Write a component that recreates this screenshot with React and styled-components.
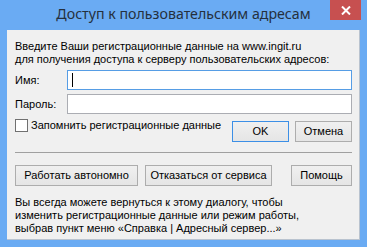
import React from "react";
import styled, { createGlobalStyle } from "styled-components";

const Global = createGlobalStyle`
  html, body { margin: 0; padding: 0; }
  body { font-family: "Liberation Sans", Arial, sans-serif; }
`;

const Frame = styled.div`
  width: 367px;
  height: 247px;
  box-sizing: border-box;
  background: #6aabf3;
  display: flex;
  flex-direction: column;
  padding: 0 7px 7px 7px;
`;

const TitleBar = styled.div`
  height: 30px;
  margin: 0 -7px;
  display: grid;
  grid-template-columns: 1fr auto 1fr;
  align-items: start;
`;

const Title = styled.div`
  grid-column: 2;
  font-family: "Noto Sans", "Open Sans", sans-serif;
  font-size: 14.2px;
  line-height: 20px;
  padding-top: 4px;
  color: #25303d;
  white-space: nowrap;
`;

const CloseBtn = styled.div`
  grid-column: 3;
  justify-self: end;
  margin-right: 6px;
  width: 31px;
  height: 20px;
  background: #c75050;
  display: flex;
  align-items: center;
  justify-content: center;
`;

const Client = styled.div`
  flex: 1;
  background: #f0f0f0;
  box-sizing: border-box;
  border-right: 1px solid #b9c3cf;
  border-bottom: 1px solid #b9c3cf;
  padding: 10px 7px 0 8px;
  display: flex;
  flex-direction: column;
  font-size: 11px;
  line-height: 13px;
  color: #000;
`;

const Paragraph = styled.div`
  white-space: nowrap;
  margin-top: ${(p) => p.$mt || 0}px;
`;

const FieldRow = styled.div`
  display: flex;
  align-items: center;
  margin-top: ${(p) => p.$mt}px;
`;

const Label = styled.div`
  width: 52px;
  flex: none;
`;

const InputBox = styled.div`
  position: relative;
  flex: 1;
  height: 20px;
  box-sizing: border-box;
  background: #fff;
  border: 1px solid ${(p) => (p.$focused ? "#569de5" : "#abadb3")};
`;

const Caret = styled.span`
  position: absolute;
  left: 4px;
  top: 2px;
  width: 1px;
  height: 14px;
  background: #000;
`;

const CheckRow = styled.div`
  display: flex;
  align-items: flex-start;
  margin-top: 5px;
`;

const CheckBox = styled.div`
  width: 13px;
  height: 13px;
  box-sizing: border-box;
  border: 1px solid #707070;
  background: #fff;
  flex: none;
`;

const CheckLabel = styled.div`
  margin-left: 3px;
  flex: 1;
  white-space: nowrap;
`;

const Button = styled.div`
  width: ${(p) => p.$w}px;
  height: 21px;
  box-sizing: border-box;
  margin-left: ${(p) => (p.$ml === "auto" ? "auto" : `${p.$ml || 0}px`)};
  margin-top: ${(p) => p.$mt || 0}px;
  border: 1px solid ${(p) => (p.$default ? "#3c8fe6" : "#adadad")};
  background: linear-gradient(#f0f0f0, #e5e5e5);
  display: flex;
  align-items: center;
  justify-content: center;
  white-space: nowrap;
  flex: none;
`;

const Separator = styled.div`
  height: 1px;
  background: #a0a0a0;
  margin-top: 10px;
`;

const ButtonRow = styled.div`
  display: flex;
  margin-top: 12px;
`;

export default function App() {
  return (
    <>
      <Global />
      <Frame>
        <TitleBar>
          <Title>Доступ к пользовательским адресам</Title>
          <CloseBtn>
            <svg width="10" height="9" viewBox="0 0 10 9">
              <path d="M1 0.5 L9 8.5 M9 0.5 L1 8.5" stroke="#fff" strokeWidth="2" />
            </svg>
          </CloseBtn>
        </TitleBar>
        <Client>
          <Paragraph>
            Введите Ваши регистрационные данные на www.ingit.ru
            <br />
            для получения доступа к серверу пользовательских адресов:
          </Paragraph>
          <FieldRow $mt={4}>
            <Label>Имя:</Label>
            <InputBox $focused>
              <Caret />
            </InputBox>
          </FieldRow>
          <FieldRow $mt={4}>
            <Label>Пароль:</Label>
            <InputBox />
          </FieldRow>
          <CheckRow>
            <CheckBox />
            <CheckLabel>Запомнить регистрационные данные</CheckLabel>
            <Button $w={57} $mt={2} $default>OK</Button>
            <Button $w={57} $mt={2} $ml={6}>Отмена</Button>
          </CheckRow>
          <Separator />
          <ButtonRow>
            <Button $w={123}>Работать автономно</Button>
            <Button $w={127} $ml={7}>Отказаться от сервиса</Button>
            <Button $w={61} $ml="auto">Помощь</Button>
          </ButtonRow>
          <Paragraph $mt={10}>
            Вы всегда можете вернуться к этому диалогу, чтобы
            <br />
            изменить регистрационные данные или режим работы,
            <br />
            выбрав пункт меню «Справка | Адресный сервер...»
          </Paragraph>
        </Client>
      </Frame>
    </>
  );
}
